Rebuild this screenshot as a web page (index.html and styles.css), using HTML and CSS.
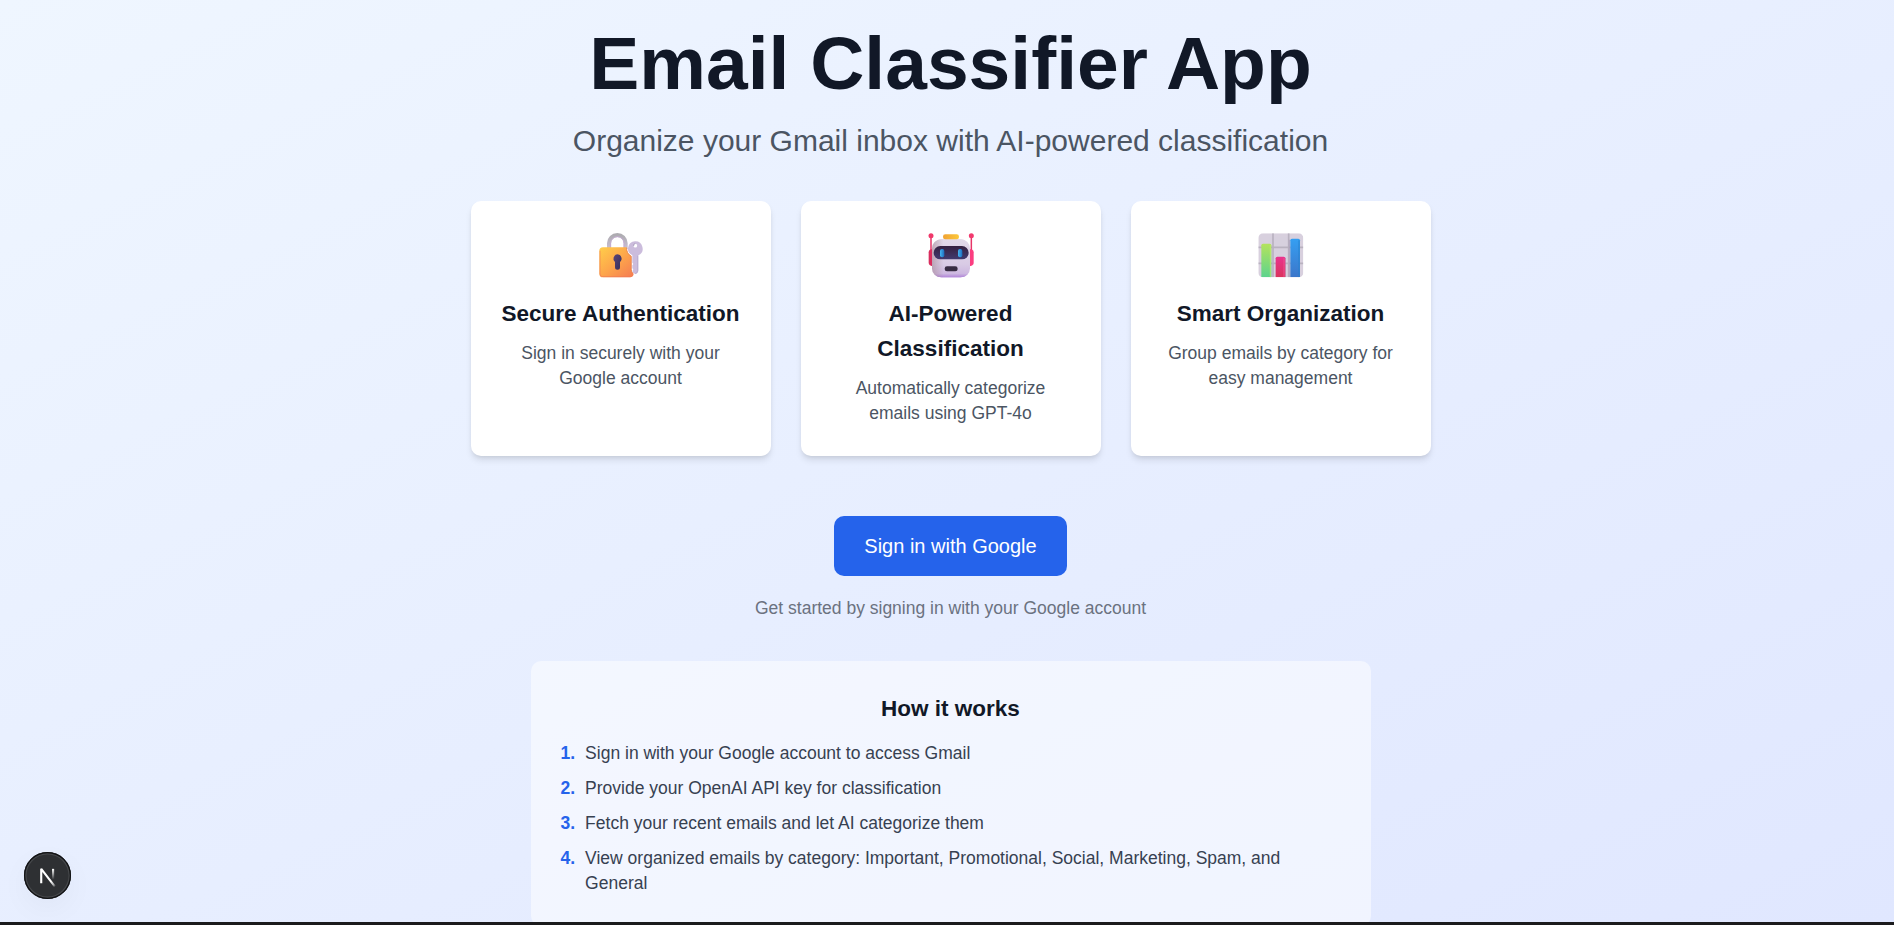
FILE: index.html
```
<!DOCTYPE html>
<html lang="en">
<head>
<meta charset="utf-8">
<title>Email Classifier App</title>
<link rel="stylesheet" href="styles.css">
</head>
<body>
<main class="page">
  <header class="hero">
    <h1 class="hero-title">Email Classifier App</h1>
    <p class="hero-subtitle">Organize your Gmail inbox with AI-powered classification</p>
  </header>

  <section class="features">
    <article class="card">
      <div class="card-icon">
        <svg width="46" height="46" viewBox="23 38 138 138">
          <defs>
            <linearGradient id="lockBody" x1="0" y1="0" x2="1" y2="1"><stop offset="0" stop-color="#ffce4a"/><stop offset=".5" stop-color="#fda64b"/><stop offset="1" stop-color="#f47a52"/></linearGradient>
            <linearGradient id="shackle" x1="0" y1="0" x2="0" y2="1"><stop offset="0" stop-color="#aeacb1"/><stop offset="1" stop-color="#c9bfd3"/></linearGradient>
            <linearGradient id="hole" x1="0" y1="0" x2="1" y2="1"><stop offset="0" stop-color="#5c4676"/><stop offset="1" stop-color="#342d5b"/></linearGradient>
          </defs>
          <path d="M56 86V69a25 25 0 0 1 50 0v17" fill="none" stroke="url(#shackle)" stroke-width="12"/>
          <path d="M61 84V69a20 20 0 0 1 40 0v15" fill="none" stroke="#c5acd2" stroke-width="3"/>
          <path d="M38 81h71q-1 17 14 26v40q0 8 7 14-2 10-10 10H38q-11 0-11-11V92q0-11 11-11z" fill="url(#lockBody)"/>
          <path d="M29 91v70q0 8 9 8h82" fill="none" stroke="#f07855" stroke-width="2.5" opacity=".75"/>
          <path d="M109 82q-1 17 14 26v40q0 7 5 11" fill="none" stroke="#e37b4c" stroke-width="3" opacity=".7"/>
          <path d="M81 102a13 13 0 0 1 8 23v16a7.500 7.500 0 0 1-15 0v-16a13 13 0 0 1 7-23z" fill="url(#hole)"/>
          <path d="M134 63a22 22 0 0 1 10 42v45q0 10-9 11-8-1-9-9l3-4-3-5v-8l3-4-3-4v-22a22 22 0 0 1 8-42z" fill="#cbbcdc"/>
          <path d="M142 106v45q-1 7-7 9" fill="none" stroke="#b9add0" stroke-width="3"/>
          <circle cx="135" cy="76" r="5.500" fill="#fff"/>
          <path d="M130 77a5.500 5.500 0 0 1 5-7" fill="none" stroke="#a596b8" stroke-width="2.500"/>
        </svg>
      </div>
      <h3 class="card-title">Secure Authentication</h3>
      <p class="card-text">Sign in securely with your Google account</p>
    </article>

    <article class="card">
      <div class="card-icon">
        <svg width="46" height="46" viewBox="37 38 138 138">
          <defs>
            <linearGradient id="face" x1="0" y1="0" x2="0" y2="1"><stop offset="0" stop-color="#e2d9e8"/><stop offset=".65" stop-color="#d9cbe5"/><stop offset=".9" stop-color="#cdb8e0"/><stop offset="1" stop-color="#b084d8"/></linearGradient>
            <linearGradient id="faceShade" x1="0" y1="0" x2="1" y2="0"><stop offset="0" stop-color="#a88a96" stop-opacity=".6"/><stop offset=".3" stop-color="#a88a96" stop-opacity="0"/></linearGradient>
            <linearGradient id="visor" x1="0" y1="0" x2="0" y2="1"><stop offset="0" stop-color="#35203f"/><stop offset="1" stop-color="#413a70"/></linearGradient>
            <linearGradient id="eye" x1="0" y1="0" x2="1" y2="0"><stop offset="0" stop-color="#45b4f2"/><stop offset="1" stop-color="#1d6cbd"/></linearGradient>
            <linearGradient id="cap" x1="0" y1="0" x2="1" y2="0"><stop offset="0" stop-color="#f0a233"/><stop offset="1" stop-color="#fcc83a"/></linearGradient>
          </defs>
          <path d="M46 48v50M167 48v50" stroke="#e63568" stroke-width="4.500"/>
          <circle cx="46" cy="46" r="7.500" fill="#f0386a"/><circle cx="167" cy="46" r="7.500" fill="#f23a6e"/>
          <path d="M54 86q-15 0-15 10v32q0 9 15 10z" fill="#d92d5e"/>
          <path d="M159 86q15 0 15 10v32q0 9-15 10z" fill="#fb3d80"/>
          <rect x="53" y="57" width="106" height="114" rx="25" fill="url(#face)"/>
          <rect x="49" y="57" width="114" height="114" rx="27" fill="url(#face)"/>
          <rect x="49" y="57" width="114" height="114" rx="27" fill="url(#faceShade)"/>
          <rect x="82" y="42" width="48" height="15" rx="7" fill="url(#cap)"/>
          <rect x="54" y="77" width="105" height="40" rx="20" fill="url(#visor)"/>
          <rect x="73" y="86" width="13" height="25" rx="6" fill="url(#eye)"/>
          <rect x="127" y="86" width="13" height="25" rx="6" fill="url(#eye)"/>
          <rect x="87" y="138" width="39" height="15" rx="7" fill="#382c43"/>
        </svg>
      </div>
      <h3 class="card-title">AI-Powered Classification</h3>
      <p class="card-text">Automatically categorize emails using GPT-4o</p>
    </article>

    <article class="card">
      <div class="card-icon">
        <svg width="46" height="46" viewBox="38 38 138 138">
          <defs>
            <clipPath id="panel"><rect x="39" y="39" width="135" height="132" rx="14"/></clipPath>
            <linearGradient id="green" x1="0" y1="0" x2="0" y2="1"><stop offset="0" stop-color="#b4e35c"/><stop offset="1" stop-color="#5cd38e"/></linearGradient>
            <linearGradient id="pink" x1="0" y1="0" x2="0" y2="1"><stop offset="0" stop-color="#ea338e"/><stop offset="1" stop-color="#d9345d"/></linearGradient>
            <linearGradient id="blue" x1="0" y1="0" x2="0" y2="1"><stop offset="0" stop-color="#359ff2"/><stop offset="1" stop-color="#3c76ca"/></linearGradient>
          </defs>
          <g clip-path="url(#panel)">
            <path d="M39 39h135v132H39z" fill="#d8d0de"/>
            <path d="M39 81h135M39 129h135M83 39v132M130 39v132" stroke="#b9b2c0" stroke-width="5"/>
            <path d="M76 75v96M120 112v59M132 58v113" stroke="#a79ab8" stroke-width="4" opacity=".6"/>
            <path d="M48 171V75q0-5 5-5h20q5 0 5 5v96z" fill="url(#green)"/>
            <path d="M75 74v97" stroke="#c5ef6b" stroke-width="3" opacity=".7"/>
            <path d="M91 171v-57q0-5 5-5h19q5 0 5 5v57z" fill="url(#pink)"/>
            <path d="M116 113v58" stroke="#ef5391" stroke-width="4" opacity=".7"/>
            <path d="M135 171V60q0-5 5-5h19q5 0 5 5v111z" fill="url(#blue)"/>
            <path d="M161 60v111" stroke="#2882cd" stroke-width="4" opacity=".65"/>
          </g>
        </svg>
      </div>
      <h3 class="card-title">Smart Organization</h3>
      <p class="card-text">Group emails by category for easy management</p>
    </article>
  </section>

  <section class="cta">
    <button class="signin" type="button">Sign in with Google</button>
    <p class="cta-note">Get started by signing in with your Google account</p>
  </section>

  <section class="how">
    <h3 class="how-title">How it works</h3>
    <ol class="steps">
      <li class="step"><span class="step-number">1.</span><span>Sign in with your Google account to access Gmail</span></li>
      <li class="step"><span class="step-number">2.</span><span>Provide your OpenAI API key for classification</span></li>
      <li class="step"><span class="step-number">3.</span><span>Fetch your recent emails and let AI categorize them</span></li>
      <li class="step"><span class="step-number">4.</span><span>View organized emails by category: Important, Promotional, Social, Marketing, Spam, and General</span></li>
    </ol>
  </section>
</main>

<div class="dev-badge">
  <svg class="dev-logo" width="47" height="47" viewBox="0 0 47 47">
    <defs>
      <linearGradient id="nDiag" gradientUnits="userSpaceOnUse" x1="9.950" y1="11.100" x2="13.500" y2="15.500"><stop stop-color="#fff"/><stop offset=".6" stop-color="#fff" stop-opacity=".6"/><stop offset="1" stop-color="#fff" stop-opacity="0"/></linearGradient>
      <linearGradient id="nStem" gradientUnits="userSpaceOnUse" x1="11.800" y1="1" x2="11.800" y2="9.600"><stop stop-color="#fff"/><stop offset="1" stop-color="#fff" stop-opacity="0"/></linearGradient>
    </defs>
    <g transform="translate(14.300 15.600) scale(1.250)" fill="none">
      <path d="M13.300 15.200 2.340 1V12.600" stroke="url(#nDiag)" stroke-width="1.700" stroke-linejoin="bevel"/>
      <path d="M11.825 1V13.100" stroke="url(#nStem)" stroke-width="1.700"/>
    </g>
  </svg>
</div>
<div class="bottom-edge"></div>
</body>
</html>
```
FILE: styles.css
```
* {
  box-sizing: border-box;
  margin: 0;
  padding: 0;
}

html,
body {
  height: 100%;
  overflow: hidden;
}

body {
  font-family: "Liberation Sans", Arial, sans-serif;
  color: #111827;
}

.page {
  display: flex;
  flex-direction: column;
  align-items: center;
  min-height: 926px;
  padding: 26px 0 0 7px;
  background: linear-gradient(to bottom right, #eff6ff, #e0e7ff);
}

.hero {
  display: flex;
  flex-direction: column;
  gap: 20px;
  text-align: center;
}

.hero-title {
  font-size: 75px;
  line-height: 75px;
  font-weight: 700;
}

.hero-subtitle {
  font-size: 30px;
  line-height: 40px;
  color: #4b5563;
}

.features {
  display: grid;
  grid-template-columns: repeat(3, 300px);
  gap: 30px;
  margin-top: 40px;
}

.card {
  height: 255px;
  padding: 30px;
  border-radius: 10px;
  background: #fff;
  text-align: center;
  box-shadow: 0 5px 7.5px -1.25px rgba(0, 0, 0, 0.1), 0 2.5px 5px -2.5px rgba(0, 0, 0, 0.1);
}

.card-icon {
  display: flex;
  align-items: center;
  justify-content: center;
  height: 50px;
  margin-bottom: 15px;
}

.card-title {
  margin-bottom: 10px;
  font-size: 22.5px;
  line-height: 35px;
  font-weight: 700;
}

.card-text {
  font-size: 17.5px;
  line-height: 25px;
  color: #4b5563;
}

.cta {
  display: flex;
  flex-direction: column;
  align-items: center;
  gap: 20px;
  margin-top: 60px;
}

.signin {
  height: 60px;
  padding: 0 30px;
  border: 0;
  border-radius: 10px;
  background: #2563eb;
  color: #fff;
  font-family: inherit;
  font-size: 20px;
  line-height: 30px;
}

.cta-note {
  font-size: 17.5px;
  line-height: 25px;
  color: #6b7280;
}

.how {
  width: 840px;
  margin-top: 40px;
  padding: 30px;
  border-radius: 10px;
  background: rgba(255, 255, 255, 0.5);
}

.how-title {
  margin-bottom: 15px;
  font-size: 22.5px;
  line-height: 35px;
  text-align: center;
}

.steps {
  display: flex;
  flex-direction: column;
  gap: 10px;
  list-style: none;
  font-size: 17.5px;
  line-height: 25px;
  color: #374151;
}

.step {
  display: flex;
  gap: 10px;
}

.step-number {
  font-weight: 700;
  color: #2563eb;
}

.dev-badge {
  position: fixed;
  left: 24px;
  bottom: 26px;
  width: 47px;
  height: 47px;
  border-radius: 50%;
  background: #2e3033;
  box-shadow: inset 0 0 0 1.25px #111214, inset 0 0 0 2.5px #45474a, 0 10px 30px rgba(0, 0, 0, 0.04);
}

.dev-logo {
  display: block;
}

.bottom-edge {
  position: fixed;
  left: 0;
  right: 0;
  bottom: 0;
  height: 3px;
  background: #1b1b1d;
}
```
